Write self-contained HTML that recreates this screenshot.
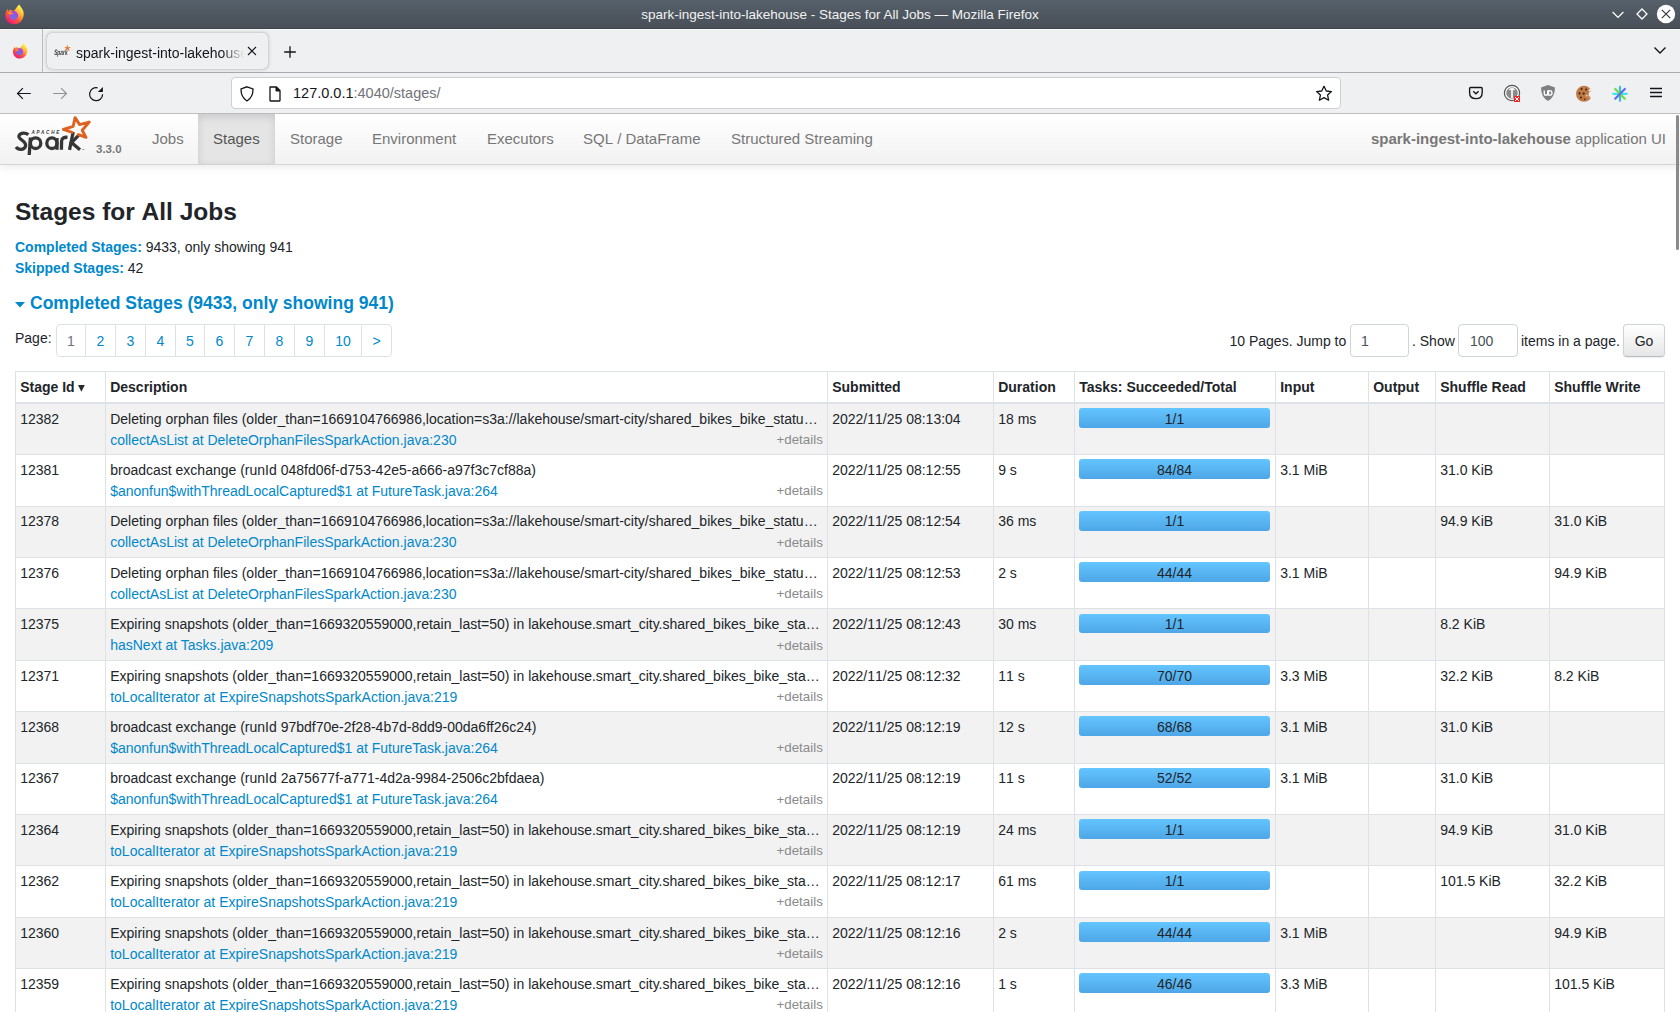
<!DOCTYPE html>
<html><head><meta charset="utf-8">
<style>
*{box-sizing:border-box;margin:0;padding:0}
html,body{width:1680px;height:1012px;overflow:hidden;background:#fff;font-family:"Liberation Sans",sans-serif;color:#212529}
.a{position:absolute}
#titlebar{position:absolute;left:0;top:0;width:1680px;height:29px;background:linear-gradient(#57616b 0px,#4d565f 16px,#4a5058 28px);border-bottom:1px solid #3d444b;z-index:2}
#titlebar .t{position:absolute;left:0;width:1680px;top:7px;text-align:center;color:#f2f2f2;font-size:13.5px;line-height:16px}
#tabbar{position:absolute;left:0;top:28px;width:1680px;height:45px;background:#eff0f1;border-bottom:1px solid #aaabae}
#navbar{position:absolute;left:0;top:73px;width:1680px;height:41px;background:#eff0f1;border-bottom:1px solid #bdbdc1}
#page{position:absolute;left:0;top:114px;width:1680px;height:898px;background:#fff;overflow:hidden}
.tab{position:absolute;left:47px;top:4.5px;width:221px;height:36px;border-radius:5px;background:#eff0f1;box-shadow:0 0 1px rgba(0,0,0,.3),0 0 4px rgba(0,0,0,.22)}
.tabt{position:absolute;left:29px;top:12px;font-size:14px;color:#15141a;white-space:nowrap;width:168px;overflow:hidden;-webkit-mask-image:linear-gradient(to right,#000 146px,transparent 168px)}
.urlbox{position:absolute;left:231px;top:4px;width:1110px;height:32px;background:#fff;border:1px solid #cfcfd3;border-radius:4px}
.urlt{position:absolute;left:61px;top:6.5px;font-size:14.5px;color:#15141a;white-space:nowrap}
.urlt span{color:#727278}
/* spark */
.snav{position:absolute;left:0;top:0;width:1680px;height:51px;background:linear-gradient(#fff,#f2f2f2);border-bottom:1px solid #d4d4d4;box-shadow:0 1px 10px rgba(0,0,0,.1)}
.nl{position:absolute;top:15.5px;font-size:15px;color:#777;line-height:18px;white-space:nowrap}
.act{position:absolute;left:198px;top:0;width:77px;height:50px;background:#e5e5e5;box-shadow:inset 0 3px 8px rgba(0,0,0,.125)}
.appn{position:absolute;right:14px;top:15.5px;font-size:15px;color:#777;line-height:18px;white-space:nowrap}
.appn b{font-weight:700}
.t14{position:absolute;font-size:14px;line-height:21px;white-space:nowrap}
.lk{color:#0088cc}
.pg{position:absolute;top:210px;height:33px;border:1px solid #dee2e6;background:#fff;color:#0088cc;font-size:14px;line-height:17.5px;padding:8px 0 0;text-align:center}
.inp{position:absolute;top:210px;height:33px;border:1px solid #ced4da;border-radius:4px;background:#fff;color:#495057;font-size:14px;line-height:21px;padding:6px 10px 0}
.gob{position:absolute;left:1623px;top:210px;width:42px;height:33px;border:1px solid #cfd3d8;border-bottom-color:#b8bcc0;border-radius:4px;background:linear-gradient(#fff,#e6e6e6);color:#212529;font-size:14px;line-height:21px;text-align:center;padding-top:6px;box-shadow:0 1px 2px rgba(0,0,0,.08)}
/* table */
.tbl{position:absolute;left:0;top:-114px;width:1680px;height:1012px}
.rw{position:absolute;left:15px;width:1650px;border-bottom:1px solid #dee2e6}
.hl{position:absolute;left:15px;width:1650px;background:#dee2e6}
.vl{position:absolute;width:1px;background:#dee2e6}
.th{position:absolute;font-size:14px;line-height:21px;font-weight:700;white-space:nowrap;color:#212529}
.td{position:absolute;font-size:14px;line-height:21px;white-space:nowrap;color:#212529}
.td.lnk{color:#0088cc}
.nk{font-kerning:none}
.det{position:absolute;font-size:13.33px;line-height:21px;color:#8a8a8a;white-space:nowrap}
.bar{position:absolute;height:20px;border-radius:3px;background:linear-gradient(#64c5ff,#4ea6e6);font-size:14px;line-height:21px;text-align:center;color:#212529}
.bar span{position:relative;top:-0.5px}
.sb{position:absolute;left:1675.5px;top:1px;width:3px;height:135px;border-radius:2px;background:#8a8a8a}
</style></head><body>
<div id="titlebar">
  <svg class="a" style="left:3.5px;top:2.5px" width="20.5" height="22.4" viewBox="0 0 22 24">
    <defs>
      <linearGradient id="ffg" x1="0.8" y1="0.1" x2="0.2" y2="0.95"><stop offset="0" stop-color="#fff44f"/><stop offset="0.3" stop-color="#ffb33a"/><stop offset="0.6" stop-color="#ff5a3a"/><stop offset="1" stop-color="#e8157f"/></linearGradient>
      <radialGradient id="ffp" cx="0.45" cy="0.75" r="0.8"><stop offset="0" stop-color="#6773e8"/><stop offset="1" stop-color="#b93be3"/></radialGradient>
    </defs>
    <path d="M16.4 1.6 C17.5 4 19.5 5.5 20.6 8.5 C22.5 13.5 19.5 22.5 11 22.8 C4.5 23 1.2 17.5 1.4 13 C1.5 10 2.5 8 4 6.5 L4.8 8.8 L6.5 7 C8 8.2 9.5 8.5 11 8.3 C12.5 6 14 4 16.4 1.6 Z" fill="url(#ffg)"/>
    <circle cx="10.5" cy="13.3" r="4.6" fill="url(#ffp)"/>
    <path d="M3.5 10.5 C5.5 9.2 8 9.8 10 11.3 L6.8 12.5 C5.5 12 4.5 11.5 3.5 10.5 Z" fill="#ff9a14"/>
  </svg>
  <div class="t">spark-ingest-into-lakehouse - Stages for All Jobs — Mozilla Firefox</div>
  <svg class="a" style="left:1610px;top:7.5px" width="16" height="14" viewBox="0 0 16 14"><path d="M2.6 4 L8 9.4 L13.4 4" stroke="#fff" stroke-width="1.25" fill="none"/></svg>
  <svg class="a" style="left:1634px;top:6px" width="16" height="16" viewBox="0 0 16 16"><path d="M8 3 L13 8 L8 13 L3 8 Z" stroke="#fff" stroke-width="1.25" fill="none"/></svg>
  <svg class="a" style="left:1656px;top:4px" width="20" height="20" viewBox="0 0 20 20"><circle cx="10" cy="10" r="9.2" fill="#fff"/><path d="M5.8 5.8 L14.2 14.2 M14.2 5.8 L5.8 14.2" stroke="#333a41" stroke-width="1.2"/></svg>
</div>
<div id="tabbar">
  <div class="a" style="left:0;top:1px;width:1680px;height:1px;background:#fafafa"></div>
  <svg class="a" style="left:12px;top:14px" width="16" height="17.5" viewBox="0 0 22 24">
    <path d="M16.4 1.6 C17.5 4 19.5 5.5 20.6 8.5 C22.5 13.5 19.5 22.5 11 22.8 C4.5 23 1.2 17.5 1.4 13 C1.5 10 2.5 8 4 6.5 L4.8 8.8 L6.5 7 C8 8.2 9.5 8.5 11 8.3 C12.5 6 14 4 16.4 1.6 Z" fill="url(#ffg)"/>
    <circle cx="10.5" cy="13.3" r="4.6" fill="url(#ffp)"/>
    <path d="M3.5 10.5 C5.5 9.2 8 9.8 10 11.3 L6.8 12.5 C5.5 12 4.5 11.5 3.5 10.5 Z" fill="#ff9a14"/>
  </svg>
  <div class="a" style="left:42px;top:0;width:1px;height:44px;background:#bcbcc0"></div>
  <div class="tab">
    <svg class="a" style="left:7px;top:9px;will-change:transform" width="18" height="16" viewBox="0 0 18 16"><text x="1.2" y="12.6" font-family="Liberation Sans" font-size="8" font-weight="700" fill="#3a3a3a" textLength="13.5" lengthAdjust="spacingAndGlyphs" transform="skewX(-6)">Spark</text><path d="M13.2 2.6 L14.2 5 L16.9 4.9 L14.9 6.6 L15.7 9.2 L13.4 7.8 L11.2 9 L12 6.6 L10.2 5 L12.6 5 Z" fill="#e8793a" opacity="0.9"/></svg>
    <div class="tabt">spark-ingest-into-lakehouse</div>
    <svg class="a" style="left:198px;top:11.5px" width="14" height="14" viewBox="0 0 14 14"><path d="M3 3 L11 11 M11 3 L3 11" stroke="#15141a" stroke-width="1.1"/></svg>
  </div>
  <svg class="a" style="left:282px;top:15.5px" width="16" height="16" viewBox="0 0 16 16"><path d="M8 2.2 V13.8 M2.2 8 H13.8" stroke="#15141a" stroke-width="1.3"/></svg>
  <svg class="a" style="left:1652px;top:14px" width="16" height="16" viewBox="0 0 16 16"><path d="M2.5 5.5 L8 11 L13.5 5.5" stroke="#15141a" stroke-width="1.4" fill="none"/></svg>
</div>
<div id="navbar">
  <svg class="a" style="left:15px;top:12px" width="18" height="17" viewBox="0 0 18 17"><path d="M15.8 8.5 H2.6 M7.9 3.1 L2.5 8.5 L7.9 13.9" stroke="#15141a" stroke-width="1.2" fill="none"/></svg>
  <svg class="a" style="left:51px;top:12px" width="18" height="17" viewBox="0 0 18 17"><path d="M2.2 8.5 H15.4 M10.1 3.1 L15.5 8.5 L10.1 13.9" stroke="#8f8f94" stroke-width="1.1" fill="none"/></svg>
  <svg class="a" style="left:87px;top:11px" width="18" height="18" viewBox="0 0 18 18"><path d="M15.6 10.2 A6.5 6.5 0 1 1 10.6 3.8" stroke="#15141a" stroke-width="1.25" fill="none"/><path d="M10.8 7.9 L15.9 2.9 L15.9 7.9 Z" fill="#15141a"/></svg>
  <div class="urlbox">
    <svg class="a" style="left:7px;top:6.5px" width="16" height="18" viewBox="0 0 16 18"><path d="M8 1.8 L14 4 Q14.2 12 8 16 Q1.8 12 2 4 Z" stroke="#15141a" stroke-width="1.3" fill="none"/></svg>
    <svg class="a" style="left:35px;top:6.5px" width="16" height="18" viewBox="0 0 16 18"><path d="M3 2 H9.5 L13 5.5 V15.5 Q13 16 12.5 16 H3.5 Q3 16 3 15.5 Z" stroke="#15141a" stroke-width="1.3" fill="none" stroke-linejoin="round"/><path d="M9 2 V6 H13" fill="#15141a" stroke="#15141a" stroke-width="1"/></svg>
    <div class="urlt">127.0.0.1<span>:4040/stages/</span></div>
    <svg class="a" style="left:1082px;top:5.5px" width="20" height="20" viewBox="0 0 20 20"><path d="M10 2.3 L12.3 7 L17.4 7.6 L13.6 11.1 L14.6 16.2 L10 13.6 L5.4 16.2 L6.4 11.1 L2.6 7.6 L7.7 7 Z" stroke="#15141a" stroke-width="1.3" fill="none" stroke-linejoin="round"/></svg>
  </div>
  <svg class="a" style="left:1467px;top:12px" width="18" height="18" viewBox="0 0 18 18"><path d="M3.6 2.5 H14.2 Q15.2 2.5 15.2 3.5 V7.4 Q15.2 13.6 8.9 13.6 Q2.6 13.6 2.6 7.4 V3.5 Q2.6 2.5 3.6 2.5 Z" stroke="#15141a" stroke-width="1.35" fill="none"/><path d="M6.2 6.2 L8.9 8.8 L11.6 6.2" stroke="#15141a" stroke-width="1.35" fill="none"/></svg>
  <svg class="a" style="left:1503px;top:11px" width="18" height="19" viewBox="0 0 18 19"><circle cx="9" cy="9" r="7.6" fill="#fff" stroke="#555" stroke-width="1.2"/><circle cx="9" cy="9" r="5.8" fill="#8a8a8a"/><path d="M9 4 V14 M6.5 6 Q9 3 11.5 6" stroke="#fff" stroke-width="1.6" fill="none"/><rect x="11" y="12" width="6" height="6" fill="#e22"/><path d="M12 13 L16 17 M16 13 L12 17" stroke="#fff" stroke-width="1"/></svg>
  <svg class="a" style="left:1540px;top:11px" width="16" height="18" viewBox="0 0 16 18"><path d="M8 1 L15 3.5 Q15 13 8 17 Q1 13 1 3.5 Z" fill="#808080"/><path d="M4.3 6.5 V9.5 Q4.3 11.3 6 11.3 Q7.7 11.3 7.7 9.5 V6.5" stroke="#fff" stroke-width="1.4" fill="none"/><path d="M8.6 6.6 H9.6 Q12 6.6 12 8.9 Q12 11.2 9.6 11.2 H8.6 Z" stroke="#fff" stroke-width="1.3" fill="none"/></svg>
  <svg class="a" style="left:1575px;top:11px" width="18" height="18" viewBox="0 0 18 18">
    <defs><mask id="bite"><rect width="18" height="18" fill="#fff"/><circle cx="17.2" cy="10.5" r="3.6" fill="#000"/><circle cx="15" cy="6.2" r="1.2" fill="#000"/></mask></defs>
    <circle cx="9" cy="9.8" r="8" fill="#c07a45" mask="url(#bite)"/>
    <circle cx="6.5" cy="5" r="1" fill="#3b2417"/><circle cx="11.2" cy="5.6" r="1" fill="#3b2417"/><circle cx="4.5" cy="9.4" r="1.1" fill="#3b2417"/><circle cx="8.7" cy="9.6" r="1.1" fill="#3b2417"/><circle cx="6" cy="13.6" r="1" fill="#3b2417"/><circle cx="9.8" cy="15.2" r="0.8" fill="#3b2417"/>
    <circle cx="13.8" cy="13.2" r="1.2" fill="#d08a55"/><circle cx="11.8" cy="11.8" r="0.7" fill="#fff"/>
  </svg>
  <svg class="a" style="left:1611px;top:11px" width="18" height="18" viewBox="0 0 18 18"><g stroke-linecap="round" stroke-width="2.2"><path d="M2.2 9.8 H15.8" stroke="#3ee4f6"/><path d="M9 2.8 V16.8" stroke="#3bbfd4"/><path d="M4.2 4.9 L13.8 14.7" stroke="#78d84a"/><path d="M4.2 14.7 L13.8 4.9" stroke="#5b6ff0"/></g></svg>
  <svg class="a" style="left:1647px;top:12px" width="18" height="16" viewBox="0 0 18 16"><path d="M3 3.5 H15 M3 7.5 H15 M3 11.5 H15" stroke="#15141a" stroke-width="1.3"/></svg>
</div>
<div id="page">
  <div class="snav">
    <svg class="a" style="left:0;top:0" width="100" height="50" viewBox="0 114 100 50">
      <g fill="none" stroke="#363636" stroke-width="3.3">
        <path d="M28.3 134.8 C26 132.6 20.5 132.3 19 135.6 C17.4 139.3 26.2 140.6 25.6 145.6 C25 150.2 18.5 150.4 16 147"/>
        <ellipse cx="35.6" cy="143.2" rx="5.2" ry="5.3"/>
        <path d="M30.4 137.5 L29.2 155"/>
        <ellipse cx="51.9" cy="143.2" rx="5.1" ry="5.3"/>
        <path d="M57 138 L57 149.8"/>
        <path d="M61.4 149.8 L61.6 141 C61.8 138.2 64 137 67.5 137.3"/>
        <path d="M69.5 149.8 L73.2 132"/>
        <path d="M78.8 135.2 L71.5 142.6 L80 149.8"/>
      </g>
      <text x="31.5" y="133.8" font-family="Liberation Sans" font-size="4.6" font-weight="700" font-style="italic" fill="#363636" letter-spacing="1.75">APACHE</text>
      <path d="M82 149.5 H84.5" stroke="#777" stroke-width="0.6"/>
      <path d="M72 132.3 L63.4 129.4 L73.2 126.3 L75.1 117.6 L79.6 124.6 L89.2 122.1 L82.2 130.3 L86 137.4 L78.4 134.6" fill="none" stroke="#e0601f" stroke-width="2.9" stroke-linejoin="round" stroke-linecap="round"/>
    </svg>
    <div class="a" style="left:96px;top:27.5px;font-size:11.5px;font-weight:700;color:#777;line-height:14px">3.3.0</div>
    <div class="act"></div>
    <div class="nl" style="left:152px">Jobs</div>
    <div class="nl" style="left:213px;color:#555">Stages</div>
    <div class="nl" style="left:290px">Storage</div>
    <div class="nl" style="left:372px">Environment</div>
    <div class="nl" style="left:487px">Executors</div>
    <div class="nl nk" style="left:583px">SQL / DataFrame</div>
    <div class="nl" style="left:731px">Structured Streaming</div>
    <div class="appn"><b>spark-ingest-into-lakehouse</b> application UI</div>
  </div>
  <div class="a nk" style="left:15px;top:83px;font-size:24.5px;line-height:29px;font-weight:700;color:#212529;white-space:nowrap">Stages for All Jobs</div>
  <div class="t14" style="left:15px;top:122.5px"><b class="lk">Completed Stages:</b> 9433, only showing 941</div>
  <div class="t14" style="left:15px;top:143.5px"><b class="lk">Skipped Stages:</b> 42</div>
  <svg class="a" style="left:15px;top:188px" width="11" height="7" viewBox="0 0 11 7"><path d="M0 0 H10 L5 5.6 Z" fill="#0088cc"/></svg>
  <div class="a" style="left:30px;top:179px;font-size:17.5px;line-height:21px;font-weight:700;color:#0088cc;white-space:nowrap">Completed Stages (9433, only showing 941)</div>
  <div class="t14" style="left:15px;top:213.5px">Page:</div>
  <div class="pg" style="left:56px;width:30px;border-radius:4px 0 0 4px;color:#6c757d;">1</div>
<div class="pg" style="left:85px;width:31px;">2</div>
<div class="pg" style="left:115px;width:31px;">3</div>
<div class="pg" style="left:145px;width:31px;">4</div>
<div class="pg" style="left:175px;width:30px;">5</div>
<div class="pg" style="left:204px;width:31px;">6</div>
<div class="pg" style="left:234px;width:31px;">7</div>
<div class="pg" style="left:264px;width:31px;">8</div>
<div class="pg" style="left:294px;width:31px;">9</div>
<div class="pg" style="left:324px;width:38px;">10</div>
<div class="pg" style="left:361px;width:31px;border-radius:0 4px 4px 0;">&gt;</div>
  <div class="t14" style="left:1229.5px;top:217px">10 Pages. Jump to</div>
  <div class="inp" style="left:1350px;width:59px">1</div>
  <div class="t14" style="left:1412px;top:217px">. Show</div>
  <div class="inp" style="left:1458px;width:60px;padding-left:11px">100</div>
  <div class="t14" style="left:1521px;top:217px">items in a page.</div>
  <div class="gob">Go</div>
  <div class="sb"></div>
  <div class="tbl">
  <div class="rw" style="top:404.00px;height:51.36px;background:#f2f2f2"></div>
<div class="rw" style="top:455.36px;height:51.36px;background:#fff"></div>
<div class="rw" style="top:506.72px;height:51.36px;background:#f2f2f2"></div>
<div class="rw" style="top:558.08px;height:51.36px;background:#fff"></div>
<div class="rw" style="top:609.44px;height:51.36px;background:#f2f2f2"></div>
<div class="rw" style="top:660.80px;height:51.36px;background:#fff"></div>
<div class="rw" style="top:712.16px;height:51.36px;background:#f2f2f2"></div>
<div class="rw" style="top:763.52px;height:51.36px;background:#fff"></div>
<div class="rw" style="top:814.88px;height:51.36px;background:#f2f2f2"></div>
<div class="rw" style="top:866.24px;height:51.36px;background:#fff"></div>
<div class="rw" style="top:917.60px;height:51.36px;background:#f2f2f2"></div>
<div class="rw" style="top:968.96px;height:51.36px;background:#fff"></div>
<div class="hl" style="top:402.00px;height:2px"></div>
<div class="hl" style="top:371px;height:1px"></div>
<div class="vl" style="left:15px;top:371px;height:641px"></div>
<div class="vl" style="left:105px;top:371px;height:641px"></div>
<div class="vl" style="left:827px;top:371px;height:641px"></div>
<div class="vl" style="left:993px;top:371px;height:641px"></div>
<div class="vl" style="left:1074px;top:371px;height:641px"></div>
<div class="vl" style="left:1275px;top:371px;height:641px"></div>
<div class="vl" style="left:1368px;top:371px;height:641px"></div>
<div class="vl" style="left:1435px;top:371px;height:641px"></div>
<div class="vl" style="left:1549px;top:371px;height:641px"></div>
<div class="vl" style="left:1664px;top:371px;height:641px"></div>
<div class="th" style="left:20.2px;top:377.20px">Stage Id</div>
<div class="th" style="left:110.2px;top:377.20px">Description</div>
<div class="th" style="left:832.2px;top:377.20px">Submitted</div>
<div class="th" style="left:998.2px;top:377.20px">Duration</div>
<div class="th" style="left:1079.2px;top:377.20px">Tasks: Succeeded/Total</div>
<div class="th" style="left:1280.2px;top:377.20px">Input</div>
<div class="th" style="left:1373.2px;top:377.20px">Output</div>
<div class="th" style="left:1440.2px;top:377.20px">Shuffle Read</div>
<div class="th nk" style="left:1554.2px;top:377.20px">Shuffle Write</div>
<div class="td" style="left:20.2px;top:409.00px">12382</div>
<div class="td" style="left:110.2px;top:409.00px">Deleting orphan files (older_than=1669104766986,location=s3a://lakehouse/smart-city/shared_bikes_bike_statu…</div>
<div class="td lnk" style="left:110.2px;top:430.00px">collectAsList at DeleteOrphanFilesSparkAction.java:230</div>
<div class="det" style="right:857.2px;top:429px">+details</div>
<div class="td nk" style="left:832.2px;top:409.00px">2022/11/25 08:13:04</div>
<div class="td nk" style="left:998.2px;top:409.00px">18 ms</div>
<div class="bar" style="left:1079.0px;top:408px;height:20px;width:191px"></div>
<div class="td" style="left:1079px;width:191px;text-align:center;top:409px">1/1</div>
<div class="td" style="left:1280.2px;top:409.00px"></div>
<div class="td" style="left:1373.2px;top:409.00px"></div>
<div class="td" style="left:1440.2px;top:409.00px"></div>
<div class="td" style="left:1554.2px;top:409.00px"></div>
<div class="td" style="left:20.2px;top:460.00px">12381</div>
<div class="td" style="left:110.2px;top:460.00px">broadcast exchange (runId 048fd06f-d753-42e5-a666-a97f3c7cf88a)</div>
<div class="td lnk" style="left:110.2px;top:481.00px">$anonfun$withThreadLocalCaptured$1 at FutureTask.java:264</div>
<div class="det" style="right:857.2px;top:480px">+details</div>
<div class="td nk" style="left:832.2px;top:460.00px">2022/11/25 08:12:55</div>
<div class="td nk" style="left:998.2px;top:460.00px">9 s</div>
<div class="bar" style="left:1079.0px;top:459px;height:20px;width:191px"></div>
<div class="td" style="left:1079px;width:191px;text-align:center;top:460px">84/84</div>
<div class="td" style="left:1280.2px;top:460.00px">3.1 MiB</div>
<div class="td" style="left:1373.2px;top:460.00px"></div>
<div class="td" style="left:1440.2px;top:460.00px">31.0 KiB</div>
<div class="td" style="left:1554.2px;top:460.00px"></div>
<div class="td" style="left:20.2px;top:511.00px">12378</div>
<div class="td" style="left:110.2px;top:511.00px">Deleting orphan files (older_than=1669104766986,location=s3a://lakehouse/smart-city/shared_bikes_bike_statu…</div>
<div class="td lnk" style="left:110.2px;top:532.00px">collectAsList at DeleteOrphanFilesSparkAction.java:230</div>
<div class="det" style="right:857.2px;top:532px">+details</div>
<div class="td nk" style="left:832.2px;top:511.00px">2022/11/25 08:12:54</div>
<div class="td nk" style="left:998.2px;top:511.00px">36 ms</div>
<div class="bar" style="left:1079.0px;top:511px;height:20px;width:191px"></div>
<div class="td" style="left:1079px;width:191px;text-align:center;top:511px">1/1</div>
<div class="td" style="left:1280.2px;top:511.00px"></div>
<div class="td" style="left:1373.2px;top:511.00px"></div>
<div class="td" style="left:1440.2px;top:511.00px">94.9 KiB</div>
<div class="td" style="left:1554.2px;top:511.00px">31.0 KiB</div>
<div class="td" style="left:20.2px;top:563.00px">12376</div>
<div class="td" style="left:110.2px;top:563.00px">Deleting orphan files (older_than=1669104766986,location=s3a://lakehouse/smart-city/shared_bikes_bike_statu…</div>
<div class="td lnk" style="left:110.2px;top:584.00px">collectAsList at DeleteOrphanFilesSparkAction.java:230</div>
<div class="det" style="right:857.2px;top:583px">+details</div>
<div class="td nk" style="left:832.2px;top:563.00px">2022/11/25 08:12:53</div>
<div class="td nk" style="left:998.2px;top:563.00px">2 s</div>
<div class="bar" style="left:1079.0px;top:562px;height:20px;width:191px"></div>
<div class="td" style="left:1079px;width:191px;text-align:center;top:563px">44/44</div>
<div class="td" style="left:1280.2px;top:563.00px">3.1 MiB</div>
<div class="td" style="left:1373.2px;top:563.00px"></div>
<div class="td" style="left:1440.2px;top:563.00px"></div>
<div class="td" style="left:1554.2px;top:563.00px">94.9 KiB</div>
<div class="td" style="left:20.2px;top:614.00px">12375</div>
<div class="td" style="left:110.2px;top:614.00px">Expiring snapshots (older_than=1669320559000,retain_last=50) in lakehouse.smart_city.shared_bikes_bike_sta…</div>
<div class="td lnk" style="left:110.2px;top:635.00px">hasNext at Tasks.java:209</div>
<div class="det" style="right:857.2px;top:635px">+details</div>
<div class="td nk" style="left:832.2px;top:614.00px">2022/11/25 08:12:43</div>
<div class="td nk" style="left:998.2px;top:614.00px">30 ms</div>
<div class="bar" style="left:1079.0px;top:614px;height:19px;width:191px"></div>
<div class="td" style="left:1079px;width:191px;text-align:center;top:614px">1/1</div>
<div class="td" style="left:1280.2px;top:614.00px"></div>
<div class="td" style="left:1373.2px;top:614.00px"></div>
<div class="td" style="left:1440.2px;top:614.00px">8.2 KiB</div>
<div class="td" style="left:1554.2px;top:614.00px"></div>
<div class="td" style="left:20.2px;top:666.00px">12371</div>
<div class="td" style="left:110.2px;top:666.00px">Expiring snapshots (older_than=1669320559000,retain_last=50) in lakehouse.smart_city.shared_bikes_bike_sta…</div>
<div class="td lnk" style="left:110.2px;top:687.00px">toLocalIterator at ExpireSnapshotsSparkAction.java:219</div>
<div class="det" style="right:857.2px;top:686px">+details</div>
<div class="td nk" style="left:832.2px;top:666.00px">2022/11/25 08:12:32</div>
<div class="td nk" style="left:998.2px;top:666.00px">11 s</div>
<div class="bar" style="left:1079.0px;top:665px;height:20px;width:191px"></div>
<div class="td" style="left:1079px;width:191px;text-align:center;top:666px">70/70</div>
<div class="td" style="left:1280.2px;top:666.00px">3.3 MiB</div>
<div class="td" style="left:1373.2px;top:666.00px"></div>
<div class="td" style="left:1440.2px;top:666.00px">32.2 KiB</div>
<div class="td" style="left:1554.2px;top:666.00px">8.2 KiB</div>
<div class="td" style="left:20.2px;top:717.00px">12368</div>
<div class="td" style="left:110.2px;top:717.00px">broadcast exchange (runId 97bdf70e-2f28-4b7d-8dd9-00da6ff26c24)</div>
<div class="td lnk" style="left:110.2px;top:738.00px">$anonfun$withThreadLocalCaptured$1 at FutureTask.java:264</div>
<div class="det" style="right:857.2px;top:737px">+details</div>
<div class="td nk" style="left:832.2px;top:717.00px">2022/11/25 08:12:19</div>
<div class="td nk" style="left:998.2px;top:717.00px">12 s</div>
<div class="bar" style="left:1079.0px;top:716px;height:20px;width:191px"></div>
<div class="td" style="left:1079px;width:191px;text-align:center;top:717px">68/68</div>
<div class="td" style="left:1280.2px;top:717.00px">3.1 MiB</div>
<div class="td" style="left:1373.2px;top:717.00px"></div>
<div class="td" style="left:1440.2px;top:717.00px">31.0 KiB</div>
<div class="td" style="left:1554.2px;top:717.00px"></div>
<div class="td" style="left:20.2px;top:768.00px">12367</div>
<div class="td" style="left:110.2px;top:768.00px">broadcast exchange (runId 2a75677f-a771-4d2a-9984-2506c2bfdaea)</div>
<div class="td lnk" style="left:110.2px;top:789.00px">$anonfun$withThreadLocalCaptured$1 at FutureTask.java:264</div>
<div class="det" style="right:857.2px;top:789px">+details</div>
<div class="td nk" style="left:832.2px;top:768.00px">2022/11/25 08:12:19</div>
<div class="td nk" style="left:998.2px;top:768.00px">11 s</div>
<div class="bar" style="left:1079.0px;top:768px;height:20px;width:191px"></div>
<div class="td" style="left:1079px;width:191px;text-align:center;top:768px">52/52</div>
<div class="td" style="left:1280.2px;top:768.00px">3.1 MiB</div>
<div class="td" style="left:1373.2px;top:768.00px"></div>
<div class="td" style="left:1440.2px;top:768.00px">31.0 KiB</div>
<div class="td" style="left:1554.2px;top:768.00px"></div>
<div class="td" style="left:20.2px;top:820.00px">12364</div>
<div class="td" style="left:110.2px;top:820.00px">Expiring snapshots (older_than=1669320559000,retain_last=50) in lakehouse.smart_city.shared_bikes_bike_sta…</div>
<div class="td lnk" style="left:110.2px;top:841.00px">toLocalIterator at ExpireSnapshotsSparkAction.java:219</div>
<div class="det" style="right:857.2px;top:840px">+details</div>
<div class="td nk" style="left:832.2px;top:820.00px">2022/11/25 08:12:19</div>
<div class="td nk" style="left:998.2px;top:820.00px">24 ms</div>
<div class="bar" style="left:1079.0px;top:819px;height:20px;width:191px"></div>
<div class="td" style="left:1079px;width:191px;text-align:center;top:820px">1/1</div>
<div class="td" style="left:1280.2px;top:820.00px"></div>
<div class="td" style="left:1373.2px;top:820.00px"></div>
<div class="td" style="left:1440.2px;top:820.00px">94.9 KiB</div>
<div class="td" style="left:1554.2px;top:820.00px">31.0 KiB</div>
<div class="td" style="left:20.2px;top:871.00px">12362</div>
<div class="td" style="left:110.2px;top:871.00px">Expiring snapshots (older_than=1669320559000,retain_last=50) in lakehouse.smart_city.shared_bikes_bike_sta…</div>
<div class="td lnk" style="left:110.2px;top:892.00px">toLocalIterator at ExpireSnapshotsSparkAction.java:219</div>
<div class="det" style="right:857.2px;top:891px">+details</div>
<div class="td nk" style="left:832.2px;top:871.00px">2022/11/25 08:12:17</div>
<div class="td nk" style="left:998.2px;top:871.00px">61 ms</div>
<div class="bar" style="left:1079.0px;top:871px;height:19px;width:191px"></div>
<div class="td" style="left:1079px;width:191px;text-align:center;top:871px">1/1</div>
<div class="td" style="left:1280.2px;top:871.00px"></div>
<div class="td" style="left:1373.2px;top:871.00px"></div>
<div class="td" style="left:1440.2px;top:871.00px">101.5 KiB</div>
<div class="td" style="left:1554.2px;top:871.00px">32.2 KiB</div>
<div class="td" style="left:20.2px;top:923.00px">12360</div>
<div class="td" style="left:110.2px;top:923.00px">Expiring snapshots (older_than=1669320559000,retain_last=50) in lakehouse.smart_city.shared_bikes_bike_sta…</div>
<div class="td lnk" style="left:110.2px;top:944.00px">toLocalIterator at ExpireSnapshotsSparkAction.java:219</div>
<div class="det" style="right:857.2px;top:943px">+details</div>
<div class="td nk" style="left:832.2px;top:923.00px">2022/11/25 08:12:16</div>
<div class="td nk" style="left:998.2px;top:923.00px">2 s</div>
<div class="bar" style="left:1079.0px;top:922px;height:20px;width:191px"></div>
<div class="td" style="left:1079px;width:191px;text-align:center;top:923px">44/44</div>
<div class="td" style="left:1280.2px;top:923.00px">3.1 MiB</div>
<div class="td" style="left:1373.2px;top:923.00px"></div>
<div class="td" style="left:1440.2px;top:923.00px"></div>
<div class="td" style="left:1554.2px;top:923.00px">94.9 KiB</div>
<div class="td" style="left:20.2px;top:974.00px">12359</div>
<div class="td" style="left:110.2px;top:974.00px">Expiring snapshots (older_than=1669320559000,retain_last=50) in lakehouse.smart_city.shared_bikes_bike_sta…</div>
<div class="td lnk" style="left:110.2px;top:995.00px">toLocalIterator at ExpireSnapshotsSparkAction.java:219</div>
<div class="det" style="right:857.2px;top:994px">+details</div>
<div class="td nk" style="left:832.2px;top:974.00px">2022/11/25 08:12:16</div>
<div class="td nk" style="left:998.2px;top:974.00px">1 s</div>
<div class="bar" style="left:1079.0px;top:973px;height:20px;width:191px"></div>
<div class="td" style="left:1079px;width:191px;text-align:center;top:974px">46/46</div>
<div class="td" style="left:1280.2px;top:974.00px">3.3 MiB</div>
<div class="td" style="left:1373.2px;top:974.00px"></div>
<div class="td" style="left:1440.2px;top:974.00px"></div>
<div class="td" style="left:1554.2px;top:974.00px">101.5 KiB</div>
<svg class="a" style="left:78px;top:384.8px" width="7" height="7" viewBox="0 0 7 7"><path d="M0 0 H6.8 L3.4 6.8 Z" fill="#2a2a2a"/></svg>
  </div>
</div>
</body></html>
